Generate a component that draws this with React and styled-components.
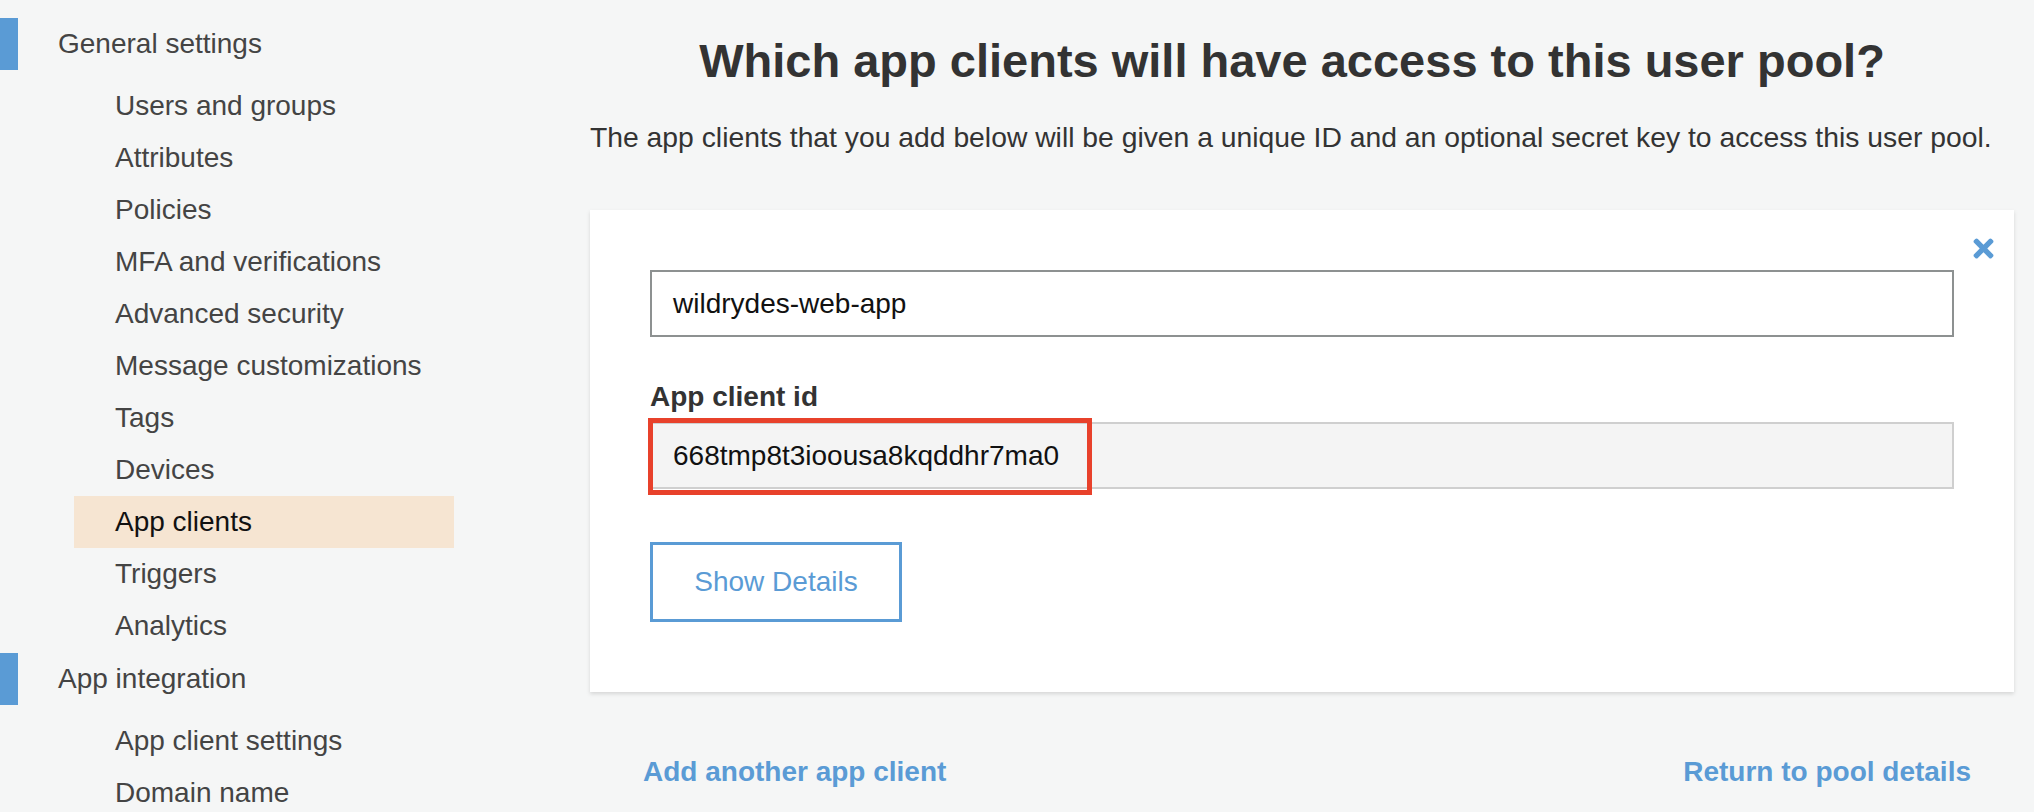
import React from 'react';
import styled, { createGlobalStyle } from 'styled-components';
import { FaTimes } from 'react-icons/fa';

const GlobalStyle = createGlobalStyle`
  html, body {
    margin: 0;
    padding: 0;
    background: #f5f6f6;
    font-family: "Liberation Sans", Arial, Helvetica, sans-serif;
    overflow: hidden;
  }
`;

const Page = styled.div`
  display: flex;
  width: 2034px;
  height: 812px;
  background: #f5f6f6;
`;

const Sidebar = styled.nav`
  width: 454px;
  flex-shrink: 0;
  padding-top: 18px;
  box-sizing: border-box;
`;

const Section = styled.div`
  margin-bottom: 1px;
`;

const SectionHeader = styled.div`
  display: flex;
  align-items: center;
  height: 52px;
  margin-bottom: 10px;
  font-size: 28px;
  color: #444;
`;

const SectionBar = styled.span`
  width: 18px;
  height: 52px;
  background: #5a9bd5;
  margin-right: 40px;
`;

const NavItem = styled.div`
  height: 52px;
  line-height: 52px;
  margin-left: 74px;
  padding-left: 41px;
  font-size: 28px;
  color: ${p => (p.$active ? '#111' : '#444')};
  background: ${p => (p.$active ? '#f6e5d2' : 'transparent')};
`;

const Main = styled.main`
  width: 1424px;
  margin-left: 136px;
  padding-top: 34px;
`;

const Title = styled.h1`
  margin: 0;
  padding-right: 20px;
  text-align: center;
  font-size: 47px;
  line-height: 54px;
  font-weight: 700;
  color: #333;
`;

const Intro = styled.p`
  margin: 31px 0 0;
  font-size: 28.3px;
  line-height: 36px;
  color: #333;
`;

const Card = styled.section`
  position: relative;
  margin-top: 55px;
  background: #fff;
  padding: 60px 60px 70px;
  box-shadow: 0 2px 4px rgba(0, 0, 0, 0.13);
`;

const CloseButton = styled.button`
  position: absolute;
  top: 28px;
  right: 21px;
  width: 20px;
  height: 20px;
  padding: 0;
  border: none;
  background: none;
  color: #5a9bd5;
  display: flex;
  align-items: center;
  justify-content: center;
  overflow: visible;
  cursor: pointer;
`;

const Field = styled.div`
  position: relative;
  height: 67px;
  box-sizing: border-box;
  border: 2px solid ${p => (p.$readOnly ? '#cfcfcf' : '#8d9191')};
  background: ${p => (p.$readOnly ? '#f4f4f4' : '#fff')};
  padding-left: 21px;
  display: flex;
  align-items: center;
  font-size: 28px;
  color: #111;
`;

const Label = styled.div`
  margin: 43px 0 8px;
  font-size: 28px;
  line-height: 34px;
  font-weight: 700;
  color: #333;
`;

const Highlight = styled.span`
  position: absolute;
  left: -4px;
  top: -6px;
  width: 444px;
  height: 77px;
  border: 5px solid #e8412b;
  box-sizing: border-box;
  pointer-events: none;
`;

const OutlineButton = styled.button`
  margin-top: 53px;
  width: 252px;
  height: 80px;
  border: 3px solid #5a9bd5;
  background: #fff;
  color: #5a9bd5;
  font-family: inherit;
  font-size: 28px;
  cursor: pointer;
`;

const Footer = styled.div`
  display: flex;
  justify-content: space-between;
  margin-top: 63px;
  padding: 0 43px 0 53px;
`;

const FooterLink = styled.a`
  font-size: 28px;
  line-height: 34px;
  font-weight: 700;
  color: #5a9bd5;
  text-decoration: none;
`;

const sections = [
  {
    title: 'General settings',
    items: [
      'Users and groups',
      'Attributes',
      'Policies',
      'MFA and verifications',
      'Advanced security',
      'Message customizations',
      'Tags',
      'Devices',
      'App clients',
      'Triggers',
      'Analytics',
    ],
  },
  {
    title: 'App integration',
    items: ['App client settings', 'Domain name'],
  },
];

export default function App() {
  return (
    <>
      <GlobalStyle />
      <Page>
        <Sidebar>
          {sections.map(s => (
            <Section key={s.title}>
              <SectionHeader>
                <SectionBar />
                {s.title}
              </SectionHeader>
              {s.items.map(item => (
                <NavItem key={item} $active={item === 'App clients'}>
                  {item}
                </NavItem>
              ))}
            </Section>
          ))}
        </Sidebar>
        <Main>
          <Title>Which app clients will have access to this user pool?</Title>
          <Intro>
            The app clients that you add below will be given a unique ID and an optional secret key to access this user pool.
          </Intro>
          <Card>
            <CloseButton aria-label="Remove">
              <FaTimes size={29} style={{ flexShrink: 0 }} />
            </CloseButton>
            <Field>wildrydes-web-app</Field>
            <Label>App client id</Label>
            <Field $readOnly>
              668tmp8t3ioousa8kqddhr7ma0
              <Highlight />
            </Field>
            <OutlineButton>Show Details</OutlineButton>
          </Card>
          <Footer>
            <FooterLink href="#">Add another app client</FooterLink>
            <FooterLink href="#">Return to pool details</FooterLink>
          </Footer>
        </Main>
      </Page>
    </>
  );
}
